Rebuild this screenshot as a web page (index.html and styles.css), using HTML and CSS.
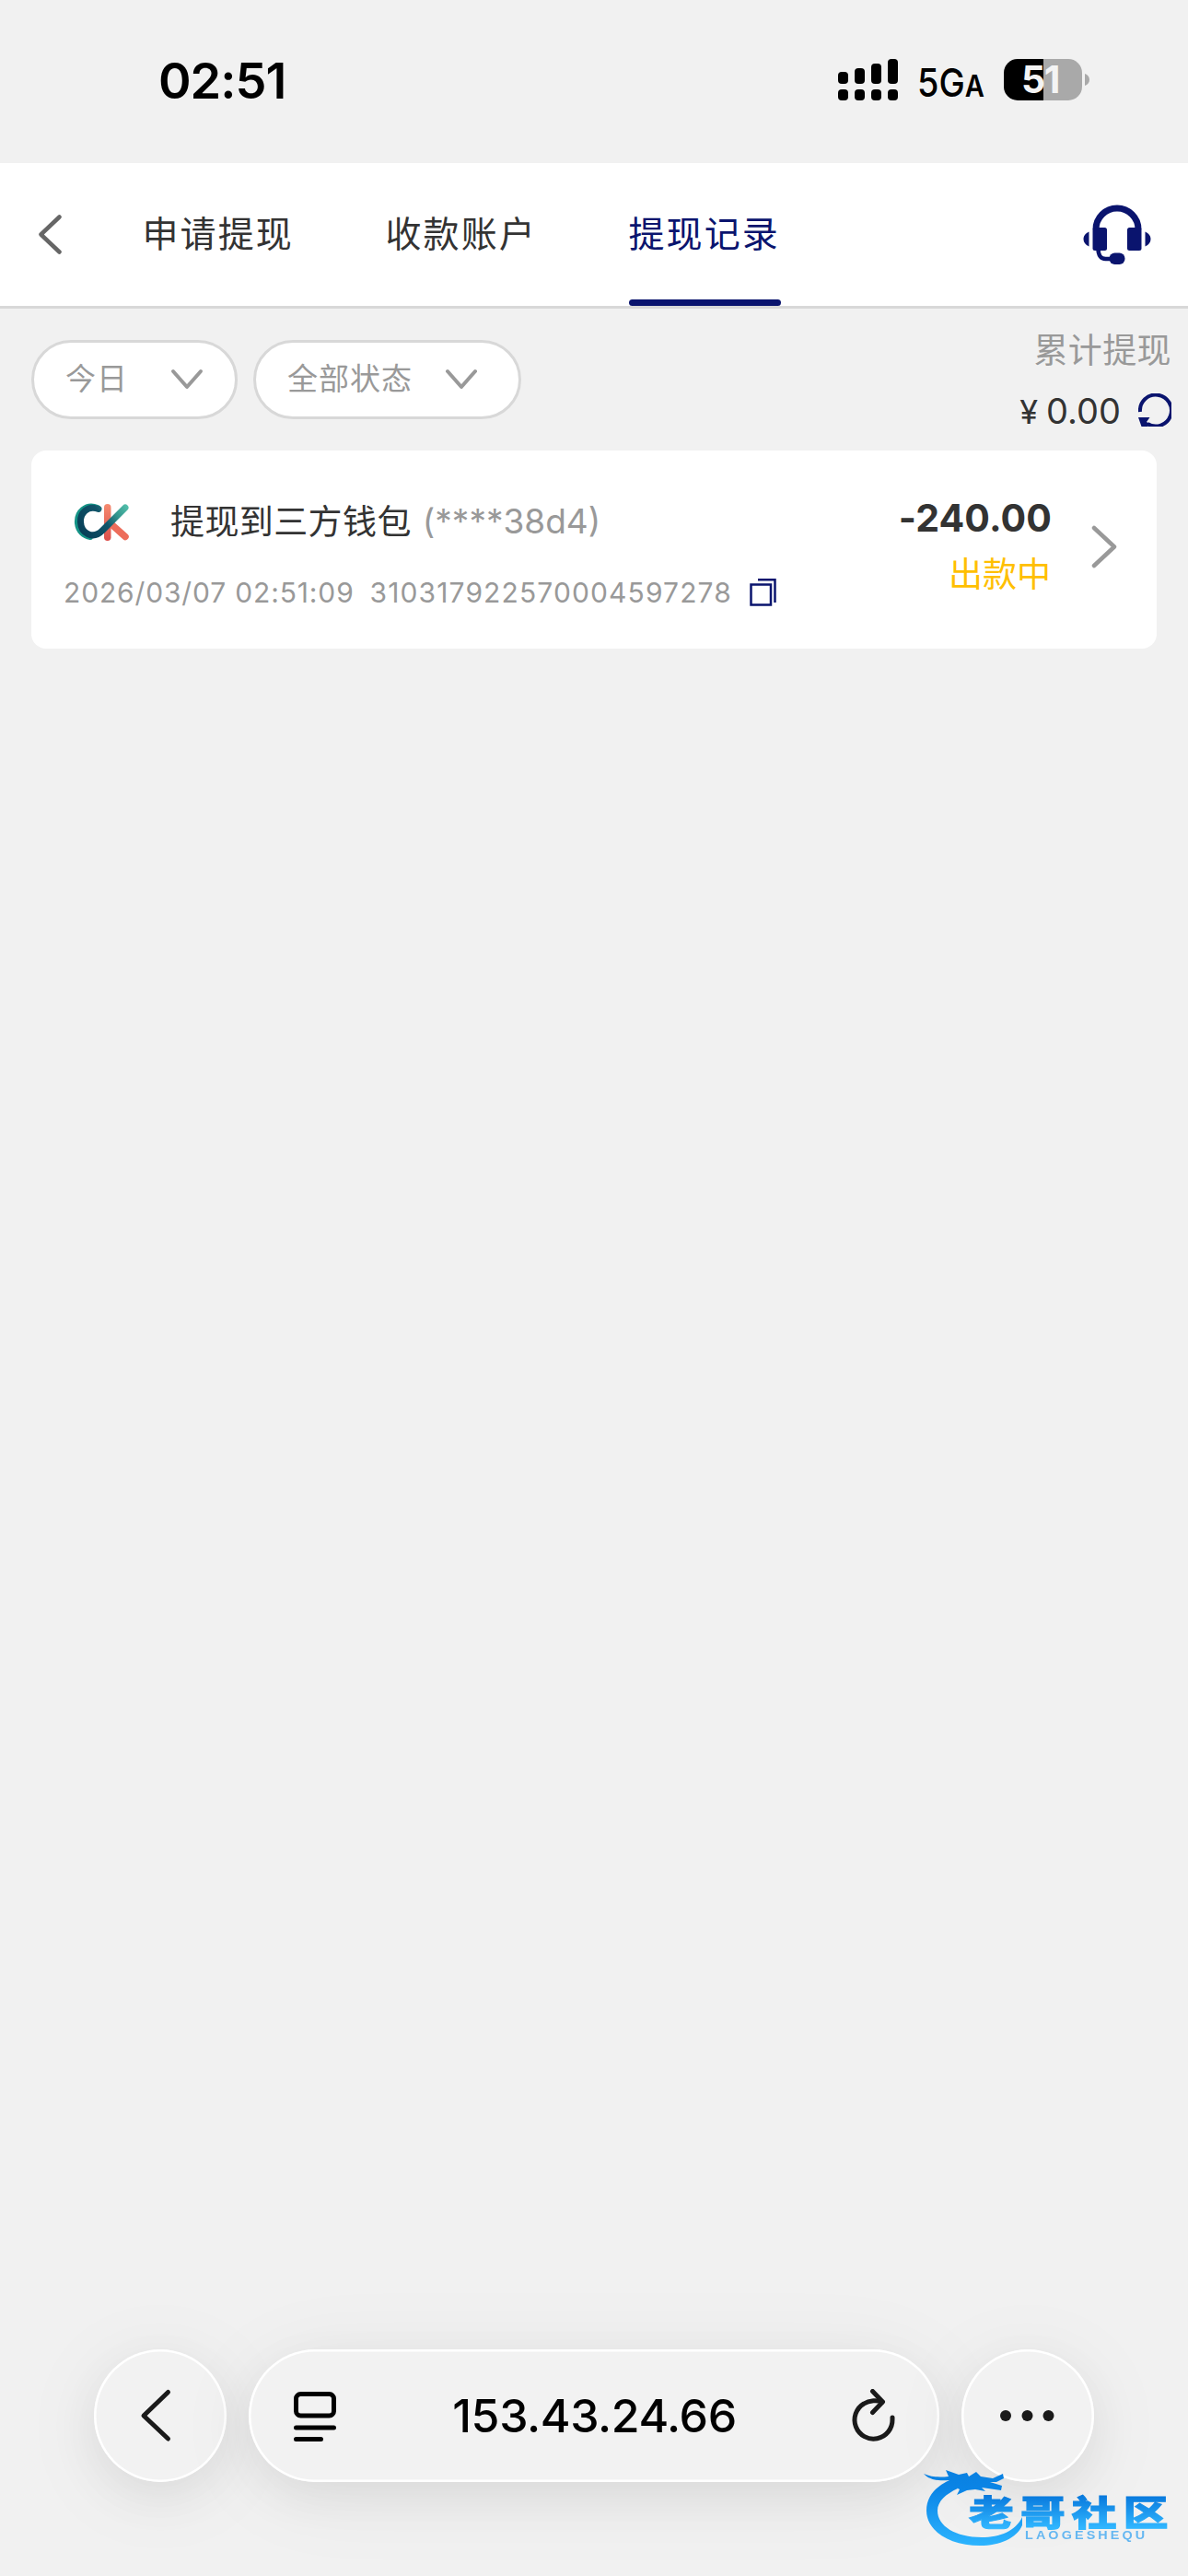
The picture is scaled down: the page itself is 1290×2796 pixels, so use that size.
FILE: index.html
```html
<!DOCTYPE html>
<html lang="zh-CN">
<head>
<meta charset="utf-8">
<title>提现记录</title>
<link rel="stylesheet" href="styles.css">
</head>
<body>
<div class="screen">
  <div class="status-bar">
    <span class="clock">02:51</span>
    <svg class="status-icons" width="274" height="50" viewBox="0 0 274 50">
      <g fill="#000">
        <rect x="0" y="16" width="11" height="13" rx="4"/>
        <rect x="18" y="12" width="11" height="17" rx="4"/>
        <rect x="36" y="7" width="11" height="22" rx="4"/>
        <rect x="54" y="2" width="11" height="27" rx="4"/>
        <rect x="0" y="35" width="11" height="12" rx="4"/>
        <rect x="18" y="35" width="11" height="12" rx="4"/>
        <rect x="36" y="35" width="11" height="12" rx="4"/>
        <rect x="54" y="35" width="11" height="12" rx="4"/>
        <text class="network" transform="translate(86 42.500) scale(.88 1)" font-size="43">5G<tspan class="network-sub" font-size="33">A</tspan></text>
      </g>
      <clipPath id="battery"><rect x="180" y="2" width="85" height="45" rx="15"/></clipPath>
      <g clip-path="url(#battery)">
        <rect x="180" y="2" width="43" height="45" fill="#000"/>
        <rect x="223" y="2" width="42" height="45" fill="#a9a9a9"/>
      </g>
      <path d="M268 18c3 1 5 3.500 5 6.500s-2 5.500-5 6.500z" fill="#a9a9a9"/>
      <text class="level" transform="translate(199 39)" font-size="41">51</text>
    </svg>
  </div>

  <header class="header">
    <svg class="back" width="27" height="44" viewBox="0 0 27 44" fill="none" stroke="#666" stroke-width="4.500" stroke-linecap="round" stroke-linejoin="round"><path d="M24.500 2.500 4.500 21.500 24.500 40.500"/></svg>
    <nav class="tabs">
      <a class="tab">申请提现</a>
      <a class="tab">收款账户</a>
      <a class="tab active">提现记录</a>
    </nav>
    <svg class="support" width="74" height="66" viewBox="0 0 74 66">
      <path d="M14 27A23 23 0 0 1 60 27" fill="none" stroke="#0a146e" stroke-width="7"/>
      <g fill="#0a146e">
        <rect x="10.500" y="25" width="15.500" height="25" rx="2.500"/>
        <rect x="48" y="25" width="15.500" height="25" rx="2.500"/>
        <path d="M6.500 29.500v16C2.500 43.500 .5 41 .5 37.500s2-6 6-8zM67.500 29.500v16c4-2 6-4.500 6-8s-2-6-6-8z"/>
        <rect x="28.500" y="52.500" width="17" height="12.500" rx="6"/>
      </g>
      <path d="M16.500 48c0 7 3 11 8 11h9" fill="none" stroke="#0a146e" stroke-width="4.500"/>
    </svg>
  </header>

  <section class="toolbar">
    <div class="filters">
      <div class="filter filter-day"><span>今日</span><svg width="36" height="24" viewBox="0 0 36 24"><path d="M3 3 18 20 33 3"/></svg></div>
      <div class="filter filter-state"><span>全部状态</span><svg width="36" height="24" viewBox="0 0 36 24"><path d="M3 3 18 20 33 3"/></svg></div>
    </div>
    <div class="total">
      <div class="total-label">累计提现</div>
      <div class="total-row">
        <span class="total-value"><span class="yen">¥</span>0.00</span>
        <svg width="36" height="36" viewBox="0 0 36 36"><path d="M2 20A17 17 0 1 1 10 33" fill="none" stroke="#0a146e" stroke-width="4"/><path d="M0 26H12.500L9 31 12.500 33 10 36H3.500z" fill="#0a146e"/></svg>
      </div>
    </div>
  </section>

  <article class="card">
    <div class="info">
      <div class="title-row">
        <svg class="logo" width="62" height="44" viewBox="0 0 62 44" fill="none" stroke-linecap="round">
          <defs>
            <linearGradient id="arm" gradientUnits="userSpaceOnUse" x1="12" y1="36" x2="58" y2="4"><stop offset="0" stop-color="#084058"/><stop offset=".48" stop-color="#11556a"/><stop offset=".75" stop-color="#35988f"/><stop offset="1" stop-color="#52beaa"/></linearGradient>
            <linearGradient id="stem" x1="0" y1="0" x2="0" y2="1"><stop offset="0" stop-color="#f58b70"/><stop offset="1" stop-color="#dc4f4b"/></linearGradient>
          </defs>
          <rect x="33" y="2" width="7.500" height="40" rx="3.700" fill="url(#stem)"/>
          <path d="M42 25 56 37.500" stroke="#ed6d5b" stroke-width="7.500"/>
          <path d="M26 6C13 1 3 11 4 23c1 9 7 14 14 15" stroke="#149386" stroke-width="6"/>
          <path d="M27 7.500C15 3 7 12 7.500 21.500 8 34 21 41 31 31L56 6" stroke="url(#arm)" stroke-width="7" stroke-linejoin="round"/>
        </svg>
        <span class="title">提现到三方钱包</span>
        <span class="wallet">(****38d4)</span>
      </div>
      <div class="meta">
        <span class="date">2026/03/07 02:51:09</span>
        <span class="order">310317922570004597278</span>
        <svg width="30" height="32" viewBox="0 0 30 32" fill="none" stroke="#0a146e" stroke-width="2.500"><path d="M9 2.200H27.500V27"/><path d="M1.500 7.500H23V29.500H1.500z"/></svg>
      </div>
    </div>
    <div class="result">
      <div class="amount">-240.00</div>
      <div class="state">出款中</div>
    </div>
    <svg class="more" width="29" height="47" viewBox="0 0 29 47" fill="none" stroke="#999" stroke-width="4.500" stroke-linecap="round" stroke-linejoin="round"><path d="M3 3 25 23.500 3 44"/></svg>
  </article>

  <footer class="browser-bar">
    <div class="round"><svg width="144" height="144" viewBox="0 0 144 144" fill="none" stroke="#1a1a1a" stroke-width="5" stroke-linecap="round" stroke-linejoin="round"><path d="M80.500 46.500 54 72 80.500 97"/></svg></div>
    <div class="address">
      <svg width="48" height="56" viewBox="0 0 48 56" fill="none" stroke="#000" stroke-width="5" stroke-linecap="round"><rect x="3.500" y="4.500" width="41" height="23.500" rx="5"/><path d="M3.500 41H44.500M3.500 53.500H30.500"/></svg>
      <span class="url">153.43.24.66</span>
      <svg width="48" height="58" viewBox="0 0 48 58" fill="none" stroke="#1a1a1a" stroke-width="5" stroke-linecap="round" stroke-linejoin="round"><path d="M34 14C29 12 20 12 14 16A20.500 20.500 0 1 0 45 33v-2"/><path d="M23.500 2.500 34.500 14 23.500 25.500"/></svg>
    </div>
    <div class="round"><svg width="144" height="144" viewBox="0 0 144 144" fill="#1a1a1a"><circle cx="48" cy="72" r="6"/><circle cx="71.500" cy="72" r="6"/><circle cx="94.500" cy="72" r="6"/></svg></div>
  </footer>

  <svg class="watermark" width="280" height="100" viewBox="0 0 280 100">
    <defs>
      <linearGradient id="sky" gradientUnits="userSpaceOnUse" x1="0" y1="10" x2="0" y2="94"><stop offset="0" stop-color="#0a80e0"/><stop offset=".25" stop-color="#0a84e6"/><stop offset="1" stop-color="#2db5ff"/></linearGradient>
      <linearGradient id="name" gradientUnits="userSpaceOnUse" x1="0" y1="-32" x2="0" y2="3"><stop offset="0" stop-color="#0878dc"/><stop offset="1" stop-color="#30b6ff"/></linearGradient>
    </defs>
    <path fill="url(#sky)" d="M33 21C17 28 6 39 6 55 6 77 31 93 64 93 86 93 104 85 110 71V62C103 77 86 84 66 84 38 84 18 72 18 55 18 45 27 37 40 31z"/>
    <path fill="url(#sky)" d="M3 15C12 19 21 19 30 18L27 11 41 16 50 14 52 18 60 13 65 18 78 20 89 15 90 20 82 24 75 24 88 28 87 33 73 31 66 30 70 34 59 32 50 33 39 38 42 32 34 28 31 22C20 23 9 22 3 15z"/>
    <text class="mark-name" transform="translate(52 70.500) scale(1.3 1)" font-size="37.500" fill="url(#name)" stroke="url(#name)" stroke-width="1">老哥社区</text>
    <text class="mark-latin" transform="translate(113 86) scale(1.150 1)" font-size="12.500">LAOGESHEQU</text>
  </svg>
</div>
</body>
</html>
```

FILE: styles.css
```css
* { box-sizing: border-box; }
body {
  margin: 0;
  background: #f1f1f1;
  color: #333;
  font-family: Inter, "Noto Sans CJK SC", sans-serif;
}
svg { display: block; flex: none; }
.screen {
  position: relative;
  display: flex;
  flex-direction: column;
  width: 1290px;
  height: 2796px;
  overflow: hidden;
}
.status-bar {
  display: flex;
  justify-content: space-between;
  align-items: flex-start;
  height: 177px;
  padding: 62px 106px 0 172px;
}
.clock {
  color: #000;
  font-size: 54px;
  font-weight: 600;
  line-height: 52px;
  letter-spacing: -1px;
}
.status-icons { overflow: visible; }
.network { font-weight: 500; }
.network-sub { font-weight: 600; }
.level { font-weight: 700; fill: #f4f4f4; letter-spacing: -1.500px; }

.header {
  display: flex;
  align-items: center;
  height: 158px;
  padding: 0 40px;
  background: #fff;
  border-bottom: 3px solid #d8d8d8;
}
.tabs { display: flex; gap: 99px; height: 155px; margin-left: 88px; }
.tab {
  position: relative;
  width: 165px;
  font-size: 39px;
  letter-spacing: 2.100px;
  line-height: 153px;
  white-space: nowrap;
  text-indent: -.5px;
}
.tab.active { color: #0a146e; }
.tab.active::after {
  content: "";
  position: absolute;
  left: 0;
  right: 0;
  bottom: 0;
  height: 7px;
  border-radius: 3.500px;
  background: #0a146e;
}
.support { margin: 0 0 0 auto; }

.toolbar {
  display: flex;
  justify-content: space-between;
  height: 154px;
  padding: 0 18px 0 34px;
}
.filters { display: flex; gap: 17px; padding-top: 34px; }
.filter {
  display: flex;
  justify-content: space-between;
  align-items: center;
  height: 86px;
  padding: 0 34px 0 34px;
  border: 3px solid #d8d8d8;
  border-radius: 43px;
  background: #fff;
  color: #999;
  font-size: 33px;
  letter-spacing: 1px;
  line-height: 78px;
}
.filter span { height: 80px; }
.filter svg { fill: none; stroke: #999; stroke-width: 4; stroke-linecap: round; stroke-linejoin: round; }
.filter-day { width: 224px; }
.filter-state { width: 291px; padding-right: 44px; }
.total { display: flex; flex-direction: column; align-items: flex-end; padding-top: 22px; }
.total-label { color: #999; font-size: 37px; line-height: 47px; letter-spacing: .4px; }
.total-row { display: flex; align-items: center; gap: 19px; height: 36px; margin-top: 23px; }
.total-value { padding-top: 3px; font-size: 38px; line-height: 40px; }
.yen { margin-right: 9px; font-size: 36px; }

.card {
  display: flex;
  height: 215px;
  margin: 0 34px;
  padding: 0 42px 0 35px;
  border-radius: 16px;
  background: #fff;
}
.title-row { display: flex; align-items: center; height: 60px; margin-top: 48px; }
.logo { margin: 0 0 0 11px; }
.title { margin: 0 0 0 43px; font-size: 37px; line-height: 48px; letter-spacing: .4px; }
.wallet { margin: -3px 0 0 12px; color: #999; font-size: 37px; }
.meta { display: flex; align-items: center; height: 40px; margin-top: 26px; color: #999; font-size: 30px; }
.date { letter-spacing: .85px; }
.order { margin-left: 17px; letter-spacing: 1.120px; }
.meta svg { margin-left: 19px; }
.result { margin-left: auto; padding-top: 48px; text-align: right; }
.amount { font-size: 41px; font-weight: 700; line-height: 50px; letter-spacing: .1px; }
.state { margin: 13px 1px 0 0; color: #ffbf00; font-size: 37px; line-height: 48px; }
.more { margin: 81px 0 0 43px; }

.browser-bar { display: flex; gap: 24px; margin: auto 0 102px 102px; }
.round, .address {
  height: 144px;
  border-radius: 72px;
  background: #f2f2f2;
  box-shadow: inset 0 0 0 2.500px #fff, 0 16px 50px rgba(0, 0, 0, .06), 0 12px 100px rgba(0, 0, 0, .06);
}
.round { width: 144px; }
.address { display: flex; justify-content: space-between; align-items: center; width: 750px; padding: 0 48px; }
.url { padding-left: 1px; color: #000; font-size: 50px; font-weight: 500; letter-spacing: -.4px; }
.watermark { position: absolute; left: 1000px; top: 2670px; filter: blur(.6px); }
.mark-name { font-family: "Noto Sans CJK SC", sans-serif; font-weight: 900; letter-spacing: 5.500px; }
.mark-latin { font-family: "Liberation Sans", sans-serif; font-weight: 700; letter-spacing: 2.700px; fill: #65b7f1; }
```
